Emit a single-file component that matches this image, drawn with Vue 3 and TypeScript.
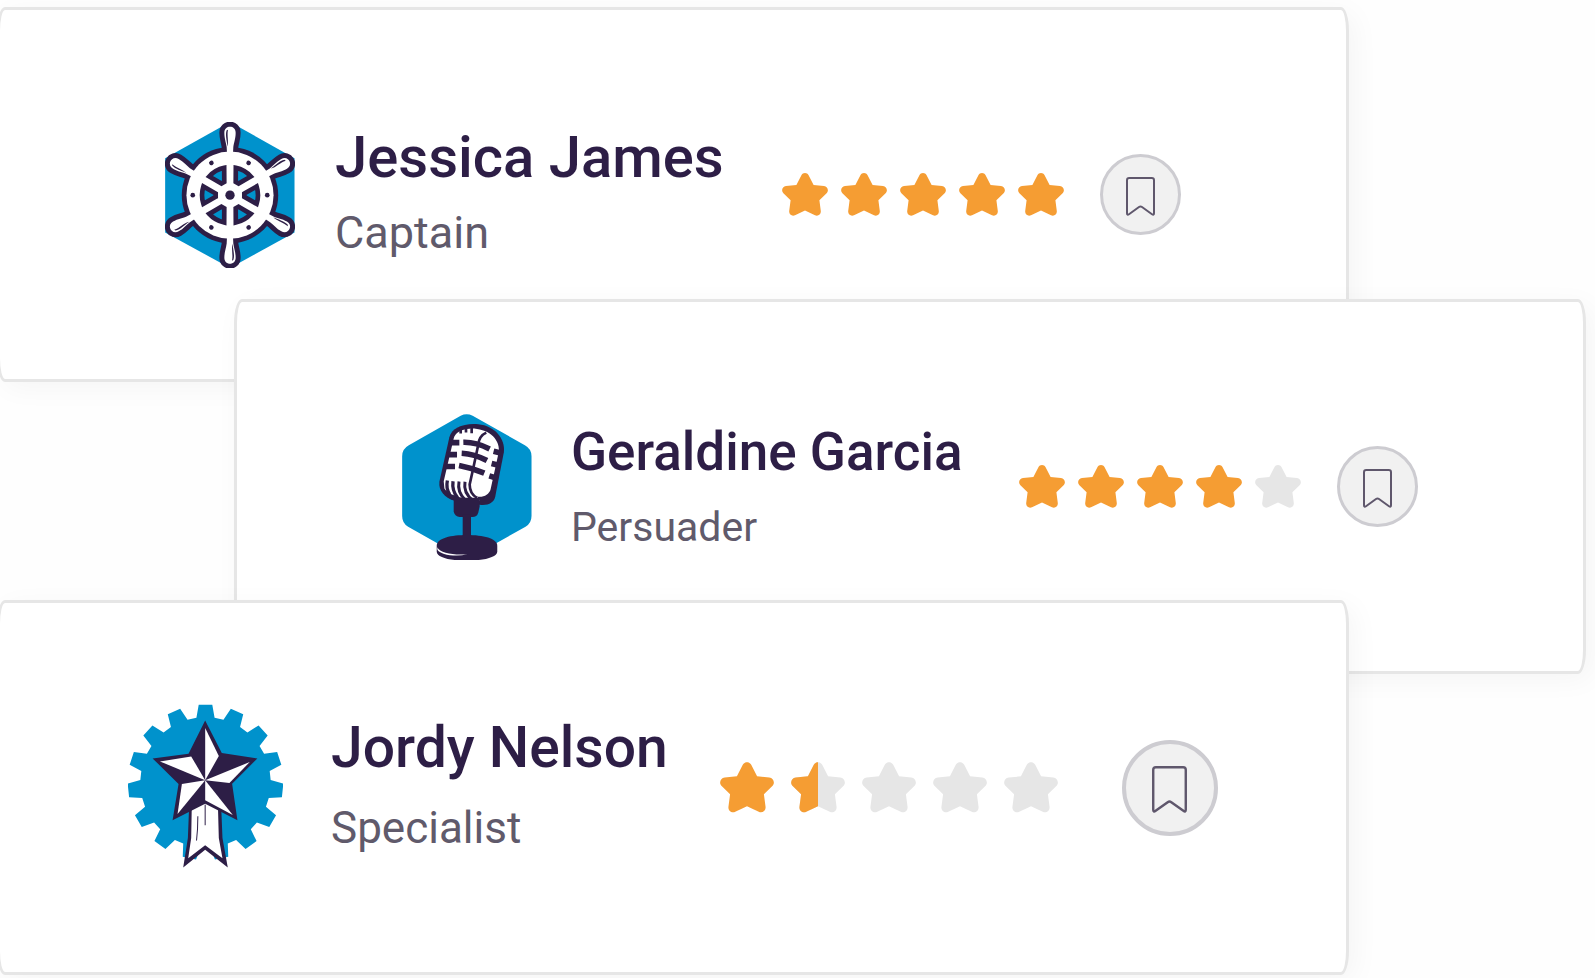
<script setup lang="ts">
interface Profile {
  name: string
  role: string
  rating: number
  badge: 'wheel' | 'mic' | 'medal'
}

const profiles: Profile[] = [
  { name: 'Jessica James', role: 'Captain', rating: 5, badge: 'wheel' },
  { name: 'Geraldine Garcia', role: 'Persuader', rating: 4, badge: 'mic' },
  { name: 'Jordy Nelson', role: 'Specialist', rating: 1.5, badge: 'medal' },
]

const starPath =
  'M19.4 2.2C20.8-.7 25.2-.7 26.6 2.2L31.6 12L42 13C45.6 13.4 47.2 17.6 44.6 20.2L37.4 27.2L38.8 38C39.2 41.4 36 43.6 33 42.2L23 37.4L13 42.2C10 43.6 6.8 41.4 7.2 38L8.6 27.2L1.4 20.2C-1.2 17.6 .4 13.4 4 13L14.4 12Z'
const halfStarPath =
  'M23 0C21.5 0 20.1 .7 19.4 2.2L14.4 12L4 13C.4 13.4-1.2 17.6 1.4 20.2L8.6 27.2L7.2 38C6.8 41.4 10 43.6 13 42.2L23 37.4Z'

const handlePath =
  'M-9-125L-10-145C-12-160-17-170-17-188C-17-212 17-212 17-188C17-170 12-160 10-145L9-125Z'
const spokeAngles = [0, 60, 120, 180, 240, 300]

// Outline of a toothed wheel around the origin
function gearPath(teeth: number, outer: number, root: number): string {
  const points: string[] = []
  const add = (radius: number, degrees: number) => {
    const a = ((degrees - 90) * Math.PI) / 180
    points.push(`${(radius * Math.cos(a)).toFixed(1)} ${(radius * Math.sin(a)).toFixed(1)}`)
  }
  for (let i = 0; i < teeth; i++) {
    const mid = (360 / teeth) * i
    add(root, mid - 8)
    add(outer, mid - 5)
    add(outer, mid + 5)
    add(root, mid + 8)
  }
  return `M${points.join('L')}Z`
}
const gear = gearPath(15, 234, 196)
</script>

<template>
  <main class="stack">
    <article v-for="p in profiles" :key="p.name" class="card" :class="`card-${p.badge}`">
      <svg v-if="p.badge === 'wheel'" class="badge" viewBox="45 33 390 439" aria-hidden="true">
        <path class="blue" d="M240 33L434 142V365L240 472L45 365V142Z" />
        <g transform="translate(240 253)">
          <path
            v-for="a in spokeAngles"
            :key="`o${a}`"
            class="handle-edge"
            :d="handlePath"
            :transform="`rotate(${a})`"
          />
          <circle class="dark" r="145" />
          <g v-for="a in spokeAngles" :key="`h${a}`" :transform="`rotate(${a})`">
            <path class="white" :d="handlePath" />
            <path class="dark" d="M-10-195C-15-180-9-165-8-146C-3-162-10-180-6-197Z" />
          </g>
          <circle class="white" r="131" />
          <g v-for="a in spokeAngles" :key="`s${a}`" :transform="`rotate(${a})`">
            <path class="pane" d="M43-5L80-26A85 85 0 0 1 80 26L43 5Z" />
            <circle class="dark" cx="112" r="7" />
          </g>
          <circle class="dark" r="14" />
        </g>
      </svg>

      <svg v-else-if="p.badge === 'mic'" class="badge" viewBox="37 38 390 439" aria-hidden="true">
        <path
          class="blue"
          d="M213 43Q231 34 249 43L406 132Q426 143 426 165V345Q426 367 408 377L250 466Q231 476 212 466L55 377Q37 367 37 345V165Q37 143 57 132Z"
        />
        <path
          class="dark"
          d="M179 108C186 80 222 65 266 69C316 74 347 112 343 152L317 286C313 305 296 314 270 311L194 299C164 290 146 268 149 242Z"
        />
        <path
          class="white"
          d="M192 112C196 94 214 84 240 82C290 80 330 108 328 150L303 264C299 280 280 290 262 286L270 298C235 296 180 286 164 262L162 240Z"
        />
        <g class="mic-bars">
          <path d="M180 124H209M221 123Q258 122 300 143" />
          <path d="M175 160H202M216 156Q254 158 292 178" />
          <path d="M168 196H196M208 193Q246 200 284 216" />
          <path d="M312 150L336 156M306 187L330 193M299 224L322 231" />
        </g>
        <g class="mic-lines">
          <path d="M213 76V97M229 76V94M246 76V96" stroke-width="8" />
          <path d="M290 94Q268 104 266 130L250 205L240 250Q240 278 262 290" stroke-width="8" />
          <path d="M173 238Q168 262 180 280M190 240Q186 268 204 290" stroke-width="10" />
          <path d="M208 241Q202 272 226 296M226 242Q220 276 250 298" stroke-width="9" />
        </g>
        <path class="dark" d="M192 290H270V317L266 334Q262 348 248 348H210Q196 346 192 332Z" />
        <path class="dark" d="M219 340H244V415H219Z" />
        <path
          class="dark"
          d="M141 434C141 411 185 402 232 402C280 402 323 412 323 434V452C323 470 275 479 232 479C185 479 141 470 141 452Z"
        />
        <path class="white" d="M143 439C150 458 195 463 233 460C195 469 150 460 143 446Z" />
      </svg>

      <svg v-else class="badge" viewBox="38 28 466 492" aria-hidden="true">
        <path class="blue" :d="gear" transform="translate(271 263)" />
        <path class="dark" d="M222 330L218 430L204 519L270 466L338 519L322 430L318 330Z" />
        <path class="white" d="M230 320L228 430L219 491L270 452L322 491L311 430L308 320Z" />
        <path
          class="dark"
          d="M270 77L320 175L427 191L351 267L367 377L270 327L172 377L190 268L112 191L220 177Z"
        />
        <g class="white">
          <path d="M270 100L311 184L270 257Z" />
          <path d="M404 202L270 257L343 265Z" />
          <path d="M270 257L353 361L270 317Z" />
          <path d="M270 257L200 268L187 358Z" />
          <path d="M270 257L134 200L228 185Z" />
        </g>
        <path class="crease" d="M270 330V392M248 365Q248 405 244 438" />
      </svg>

      <div class="who">
        <h2 class="name">{{ p.name }}</h2>
        <p class="role">{{ p.role }}</p>
      </div>

      <div class="rating" role="img" :aria-label="`Rated ${p.rating} out of 5`">
        <svg v-for="n in 5" :key="n" class="star" viewBox="0 0 46 43">
          <path :class="p.rating >= n ? 'star-on' : 'star-off'" :d="starPath" />
          <path v-if="p.rating === n - 0.5" class="star-on" :d="halfStarPath" />
        </svg>
      </div>

      <button class="save" type="button" :aria-label="`Bookmark ${p.name}`">
        <svg class="bookmark" viewBox="0 0 29 39" aria-hidden="true">
          <path
            d="M3.2 1H25.8Q28 1 28 3.2V36.3Q28 38.6 26 37.2L16 30Q14.5 28.9 13 30L3 37.2Q1 38.6 1 36.3V3.2Q1 1 3.2 1Z"
          />
        </svg>
      </button>
    </article>
  </main>
</template>

<style>
body {
  margin: 0;
  background: #fefefe;
}
</style>

<style scoped>
.stack {
  display: flex;
  flex-direction: column;
  padding: 7px 0 3px;
  overflow: hidden;
  font-family: Roboto, 'Liberation Sans', sans-serif;
}

.card {
  position: relative;
  box-sizing: border-box;
  display: flex;
  align-items: center;
  min-height: 375px;
  margin: 0 246px 0 -3px;
  padding-left: 165px;
  border: 3px solid #e6e6e6;
  border-radius: 8px / 24px;
  background: #fff;
  box-shadow: 6px 6px 28px rgba(0, 0, 0, 0.04);
}

.card-mic {
  margin: -83px 9px 0 234px;
}

.card-medal {
  margin-top: -74px;
  padding-left: 128px;
}

.badge {
  flex: none;
  width: 130px;
  height: 146px;
}

.card-medal .badge {
  width: 155px;
  height: 164px;
  padding-bottom: 3px;
}

.blue {
  fill: #0092cc;
}

.dark {
  fill: #2d1e46;
}

.white {
  fill: #fff;
}

.handle-edge {
  fill: #2d1e46;
  stroke: #2d1e46;
  stroke-width: 30;
  stroke-linejoin: round;
}

.pane {
  fill: #0092cc;
  stroke: #2d1e46;
  stroke-width: 14;
}

.mic-bars,
.mic-lines {
  fill: none;
  stroke: #2d1e46;
}

.mic-bars {
  stroke-width: 17;
}

.crease {
  fill: none;
  stroke: #2d1e46;
  stroke-width: 3;
}

.who {
  flex: none;
  margin: 0 58px 0 40px;
  white-space: nowrap;
}

.name,
.role {
  margin: 0;
  line-height: 75px;
}

.name {
  color: #2d1e46;
  font-size: 58px;
  font-weight: 500;
}

.role {
  color: #605a6b;
  font-size: 45px;
  font-weight: 400;
}

.card-mic .who {
  margin: 0 57px 0 39px;
  padding-top: 6px;
}

.card-mic .name {
  font-size: 53px;
}

.card-mic .role {
  font-size: 41px;
}

.card-medal .who {
  margin: 0 52px 0 48px;
}

.card-medal .name,
.card-medal .role {
  line-height: 80px;
}

.card-medal .name {
  font-size: 57px;
}

.card-medal .role {
  font-size: 44px;
}

.rating {
  display: flex;
  flex: none;
  gap: 13px;
}

.star {
  width: 46px;
  height: 43px;
}

.card-medal .rating {
  gap: 17px;
}

.card-medal .star {
  width: 54px;
  height: 51px;
}

.star-on {
  fill: #f59d33;
}

.star-off {
  fill: #e6e6e6;
}

.save {
  box-sizing: border-box;
  display: flex;
  flex: none;
  align-items: center;
  justify-content: center;
  width: 81px;
  height: 81px;
  margin-left: 36px;
  padding: 4px 0 0;
  border: 3px solid #cdccd1;
  border-radius: 50%;
  background: #f1f1f1;
  cursor: pointer;
}

.bookmark {
  width: 29px;
  height: 39px;
  fill: none;
  stroke: #5f576c;
  stroke-width: 2;
}

.card-medal .save {
  width: 96px;
  height: 96px;
  margin-left: 64px;
  border-width: 4px;
}

.card-medal .bookmark {
  width: 35px;
  height: 47px;
}
</style>
